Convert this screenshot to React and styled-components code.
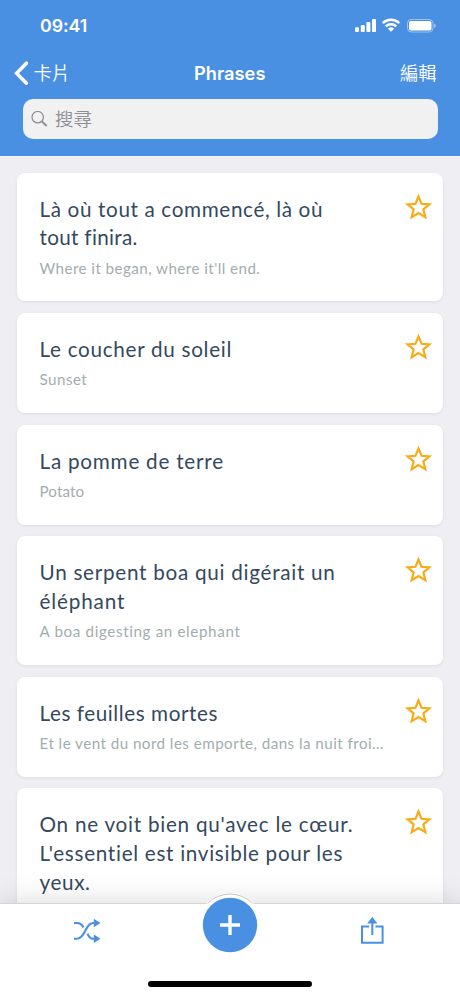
import React from "react";
import styled, { createGlobalStyle } from "styled-components";

const blue = "#4a90e2";

const GlobalStyle = createGlobalStyle`
  * { box-sizing: border-box; }
  body { margin: 0; background: #fff; }
  button { border: 0; padding: 0; background: none; font: inherit; color: inherit; }
`;

const Screen = styled.div`
  width: 460px;
  height: 996px;
  display: flex;
  flex-direction: column;
  overflow: hidden;
  background: #eeeef3;
`;

const Header = styled.header`
  flex: none;
  height: 156px;
  background: ${blue};
  color: #fff;
  font-family: Inter, "Noto Sans CJK TC", sans-serif;
`;

const StatusBar = styled.div`
  height: 50px;
  padding: 1px 24px 0 40px;
  display: flex;
  align-items: center;
  justify-content: space-between;
`;

const Clock = styled.span`
  font-size: 17.8px;
  font-weight: 600;
  letter-spacing: -0.1px;
`;

const StatusIcons = styled.svg`
  display: block;
  width: 84px;
  height: 20px;
`;

const NavBar = styled.div`
  height: 49px;
  padding: 0 23.5px 3px 14px;
  display: grid;
  grid-template-columns: 1fr auto 1fr;
  align-items: center;
`;

const NavButton = styled.button`
  display: flex;
  align-items: center;
  gap: 4.5px;
  justify-self: ${(p) => (p.$end ? "end" : "start")};
  font-size: 18.3px;
  font-weight: 350;
  line-height: 28px;
`;

const Title = styled.h1`
  margin: 0;
  padding-left: 9px;
  font-size: 18.2px;
  font-weight: 600;
  letter-spacing: 0.05px;
`;

const Search = styled.div`
  height: 40px;
  margin: 0 22.5px;
  padding: 0 8px;
  display: flex;
  align-items: center;
  gap: 7.5px;
  border-radius: 10px;
  background: #f1f1f2;
  color: #8e8e93;
  font-size: 18.5px;
  font-weight: 350;
  line-height: 36px;
`;

const List = styled.main`
  flex: 1;
  min-height: 0;
  overflow: hidden;
  border-top: 1px solid #f5f5f7;
  padding: 15.6px 17px 0;
  display: flex;
  flex-direction: column;
  gap: 11.5px;
`;

const Card = styled.article`
  flex: none;
  height: ${(p) => 71.45 + p.$lines * 28.7}px;
  padding: 22px 11px 0 22.5px;
  display: flex;
  justify-content: space-between;
  border-radius: 8px;
  background: #fff;
  box-shadow: 0 1px 3px rgba(60, 60, 120, 0.1);
  font-family: Lato, sans-serif;
  white-space: nowrap;
`;

const Phrase = styled.h2`
  margin: 0;
  color: #34495e;
  font-size: 20.7px;
  font-weight: 400;
  line-height: 28.7px;
`;

const Line = styled.span`
  display: block;
  width: max-content;
  letter-spacing: ${(p) => p.$tracking}px;
`;

const Translation = styled.p`
  width: max-content;
  margin: 5.6px 0 0;
  color: #a3adae;
  font-size: 15.2px;
  font-weight: 400;
  line-height: 20px;
  letter-spacing: ${(p) => p.$tracking}px;
`;

const Star = styled.svg`
  flex: none;
  width: 28px;
  height: 28px;
  margin-top: -2px;
  overflow: visible;
`;

const TabBar = styled.footer`
  flex: none;
  position: relative;
  height: 93px;
  padding-top: 1px;
  display: grid;
  grid-template-columns: 174px 112px 174px;
  grid-template-rows: 52px 1fr;
  justify-items: center;
  background: #fff;
  border-top: 1px solid #d4d4d6;
  box-shadow: 0 -3px 26px rgba(0, 0, 0, 0.13);
`;

const TabButton = styled.button`
  width: 32px;
  height: 52px;
  display: flex;
  align-items: center;
  justify-content: center;
  color: ${blue};
`;

const AddButton = styled.button`
  width: 64px;
  height: 64px;
  margin-top: -12px;
  color: #fff;
`;

const HomeIndicator = styled.div`
  grid-column: 1 / -1;
  align-self: end;
  width: 164px;
  height: 5.5px;
  margin-bottom: 9.3px;
  border-radius: 3px;
  background: #000;
`;

const cards = [
  { lines: [["Là où tout a commencé, là où", 0.63], ["tout finira.", 0.3]], text: "Where it began, where it'll end.", tracking: 0.43 },
  { lines: [["Le coucher du soleil", 0.7]], text: "Sunset", tracking: 0.45 },
  { lines: [["La pomme de terre", 0.76]], text: "Potato", tracking: 0.1 },
  { lines: [["Un serpent boa qui digérait un", 0.72], ["éléphant", 0.85]], text: "A boa digesting an elephant", tracking: 0.63 },
  { lines: [["Les feuilles mortes", 0.56]], text: "Et le vent du nord les emporte, dans la nuit froi…", tracking: 0.45 },
  {
    lines: [["On ne voit bien qu'avec le cœur.", 0.74], ["L'essentiel est invisible pour les", 0.69], ["yeux.", 0.6]],
  },
];

function Status() {
  return (
    <StatusIcons viewBox="0 0 84 20" fill="#fff">
      <rect x="3" y="11.3" width="4" height="4.7" rx="1" />
      <rect x="8.8" y="9" width="4" height="7" rx="1" />
      <rect x="14.4" y="6" width="4" height="10" rx="1" />
      <rect x="20" y="3" width="4" height="13" rx="1" />
      <g fill="none" stroke="#fff" strokeWidth="2.5">
        <path d="M30.7 7.2A12 12 0 0 1 47.3 7.2" />
        <path d="M33.8 10.4A7.5 7.5 0 0 1 44.2 10.4" />
      </g>
      <path d="M39 15.8L35.9 12.7A4.5 4.5 0 0 1 42.1 12.7Z" />
      <rect x="55.5" y="3.5" width="25.5" height="12.5" rx="3.8" fill="none" stroke="#fff" strokeOpacity=".45" />
      <rect x="57" y="5" width="22.5" height="9.5" rx="2" />
      <path d="M82.2 7.6v4.4q1.5-.8 1.5-2.2t-1.5-2.2z" opacity=".55" />
    </StatusIcons>
  );
}

export default function App() {
  return (
    <Screen>
      <GlobalStyle />
      <Header>
        <StatusBar>
          <Clock>09:41</Clock>
          <Status />
        </StatusBar>
        <NavBar>
          <NavButton>
            <svg width="15" height="24" viewBox="0 0 15 24" fill="none" stroke="#fff" strokeWidth="3.5">
              <path d="M12.4 2.2L2.6 12.2L12.4 22.2" strokeLinecap="round" />
            </svg>
            卡片
          </NavButton>
          <Title>Phrases</Title>
          <NavButton $end>編輯</NavButton>
        </NavBar>
        <Search>
          <svg width="17" height="17" viewBox="0 0 17 17" fill="none" stroke="#8e8e93" strokeWidth="1.2">
            <circle cx="6.7" cy="6.2" r="5.7" />
            <path d="M11 10.5L15.7 15" strokeWidth="1.9" />
          </svg>
          搜尋
        </Search>
      </Header>
      <List>
        {cards.map((card) => (
          <Card key={card.lines[0][0]} $lines={card.lines.length}>
            <div>
              <Phrase>
                {card.lines.map(([line, tracking]) => (
                  <Line key={line} $tracking={tracking}>{line}</Line>
                ))}
              </Phrase>
              {card.text && <Translation $tracking={card.tracking}>{card.text}</Translation>}
            </div>
            <Star viewBox="0 0 28 28" fill="none" stroke="#f9aa14" strokeWidth="2.2">
              <path d="M14.5 3.4L17.5 10.8L25.4 11.4L19.4 16.5L21.3 24.1L14.5 20L7.7 24.1L9.6 16.5L3.6 11.4L11.5 10.8Z" />
            </Star>
          </Card>
        ))}
      </List>
      <TabBar>
        <TabButton>
          <svg width="28" height="26" viewBox="0 0 28 26" fill="none" stroke="currentColor" strokeWidth="2.1">
            <path d="M1 20.7H4C12 20.7 12.5 5 20 5H21" />
            <path d="M1 5H4C7.2 5 9.2 7 10.4 9.5M14.4 15.6C15.6 18.5 17.2 20.7 20 20.7H21" />
            <path d="M20.8 .8L27.5 5L20.8 9.2ZM20.8 16.5L27.5 20.7L20.8 24.9Z" fill="currentColor" stroke="none" />
          </svg>
        </TabButton>
        <AddButton>
          <svg width="64" height="64" viewBox="0 0 64 64">
            <circle cx="32" cy="32" r="32" fill="#fff" />
            <path d="M9.5 10.5A31.5 31.5 0 0 1 54.5 10.5" fill="none" stroke="#c5c5c7" />
            <circle cx="32" cy="32" r="27.2" fill={blue} />
            <path d="M32 22V42M22 32H42" stroke="#fff" strokeWidth="3.4" />
          </svg>
        </AddButton>
        <TabButton>
          <svg width="24" height="28" viewBox="0 0 24 28" fill="none" stroke="currentColor" strokeWidth="2">
            <path d="M8.2 9.5H1V25.8H21.6V9.5H14.4M11.3 6V18" />
            <path d="M11.3 0L16.5 6.5H6.1Z" fill="currentColor" stroke="none" />
          </svg>
        </TabButton>
        <HomeIndicator />
      </TabBar>
    </Screen>
  );
}
